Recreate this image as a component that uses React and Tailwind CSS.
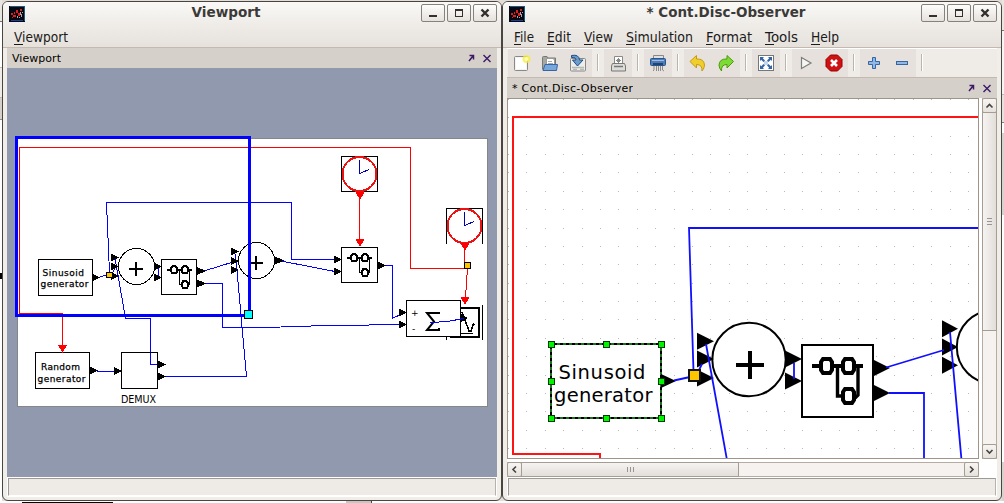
import React from "react";

const BLUE = "#0000ff";
const RED = "#ff0000";
const FONT = '"DejaVu Sans", Verdana, sans-serif';

/* ---------- window chrome ---------- */

function AppIcon() {
  return (
    <svg width="16" height="16" viewBox="0 0 16 16" shapeRendering="crispEdges">
      <rect width="16" height="16" fill="#050914" />
      <path d="M1 .5H15.5V15" fill="none" stroke="#1d5a7c" />
      <path d="M2 14.5H14" stroke="#1a3f9c" />
      <path d="M2 7h2v2h-2zM4 9h3v2h-3zM3 11h1v1h-1zM7 4h2v3h-2zM5 6h1v2h-1zM9 7h2v3h-2zM11 3h2v2h-2z" fill="#e01c1c" />
      <path d="M8 10h1v2h-1zM11 6h1v3h-1zM12 8h1v3h-1zM10 11h1v1h-1zM13 6h1v1h-1z" fill="#b7a4aa" />
    </svg>
  );
}

function TitleButton({ kind }) {
  return (
    <div className="h-[18px] w-6 rounded-[2px] border border-[#85827e] bg-linear-to-b from-[#fdfdfc] to-[#e6e1dc]">
      <svg width="22" height="16" viewBox="0 0 22 16" fill="none" stroke="#33302d" className="block">
        {kind === "min" && <path d="M7 11H15" strokeWidth="2" />}
        {kind === "max" && <path d="M7.5 4.5H14.5V11.5H7.5ZM7 5H15" strokeWidth="1.2" shapeRendering="crispEdges" />}
        {kind === "close" && <path d="M7.5 4.5L14.5 11.5M14.5 4.5L7.5 11.5" strokeWidth="2.4" />}
      </svg>
    </div>
  );
}

function TitleBar({ title, width }) {
  return (
    <div className="flex h-[25px] shrink-0 items-start">
      <div className="ml-[2px] w-4 pt-1"><AppIcon /></div>
      <svg className="-mr-[7px] -ml-[1px] h-[25px] flex-1" width="10" height="25">
        <text x="50%" y="15" textAnchor="middle" fontFamily={FONT} fontWeight="bold" fontSize="13.33" textLength={width} lengthAdjust="spacingAndGlyphs" fill="#3b3a38">{title}</text>
      </svg>
      <div className="flex gap-[2px] pt-[2px]">
        <TitleButton kind="min" /><TitleButton kind="max" /><TitleButton kind="close" />
      </div>
    </div>
  );
}

function MenuItem({ label, w }) {
  return (
    <svg width={w} height="20" className="overflow-visible">
      <text x="0" y="15" fontFamily={FONT} fontSize="13.33" textLength={w} lengthAdjust="spacingAndGlyphs" fill="#1a1a1a">{label}</text>
      <path d={label === "File" || label === "Edit" || label === "Format" ? "M0 17.5H7" : "M0 17.5H9"} stroke="#1a1a1a" shapeRendering="crispEdges" />
    </svg>
  );
}

function DockBar({ title, w }) {
  return (
    <div className="flex h-5 shrink-0 items-center justify-between bg-[#d5d0c9]">
      <svg width={w + 5} height="20">
        <text x="5" y="14" fontFamily={FONT} fontSize="11" textLength={w} fill="#000">{title}</text>
      </svg>
      <svg width="32" height="20" fill="none" stroke="#3c1a68" strokeWidth="1.4">
        <path d="M4.5 7.5H8.5V11.5M8 8L4 13" strokeWidth="1.5" />
        <path d="M18.5 7L25.5 14M25.5 7L18.5 14" />
      </svg>
    </div>
  );
}

function StatusBar() {
  return (
    <div className="h-5 shrink-0 border border-white bg-[#eeebe7]">
      <div className="h-[18px] border border-[#9c9a96] border-b-white border-r-[#b5b2ad]" />
    </div>
  );
}

function Window({ children }) {
  return (
    <div className="mt-[1px] flex h-[500px] w-[500px] shrink-0 flex-col overflow-hidden rounded-[6px] border border-[#494641] bg-[#f1eeea] px-1">
      {children}
    </div>
  );
}

/* ---------- diagram parts ---------- */

function Tri({ x, y, w = 8, h = 8 }) {
  return <path d={`M${x} ${y - h / 2}L${x + w} ${y}L${x} ${y + h / 2}Z`} fill="#000" />;
}

function DownTri({ x, y, h = 8 }) {
  return <path d={`M${x - 4.5} ${y}H${x + 4.5}L${x} ${y + h}Z`} fill={RED} />;
}

function SuperGlyph({ x, y, s = 1 }) {
  return (
    <g transform={`translate(${x} ${y}) scale(${s})`} fill="none" stroke="#000" strokeWidth="4">
      <path d="M10 21H61" />
      {[[19, 14], [41, 14], [41, 44]].map(([a, b]) => (
        <path key={a + "-" + b} d={`M${a + 2} ${b}H${a + 9}L${a + 11} ${b + 3}V${b + 11}L${a + 9} ${b + 14}H${a + 2}L${a} ${b + 11}V${b + 3}Z`} fill="#fff" />
      ))}
      <path d="M35.5 22V51H39M56 22V50L53 53" strokeWidth="3.4" />
    </g>
  );
}

function Clock({ cx, cy }) {
  return (
    <g>
      <circle cx={cx} cy={cy} r="17" fill="none" stroke="#ee1111" strokeWidth="2" />
      <path d={`M${cx} ${cy - 14}V${cy - .5}L${cx + 9.5} ${cy - 4.5}`} fill="none" stroke="#0000b0" />
    </g>
  );
}

function Label({ x, y, w, size, children }) {
  return <text x={x} y={y} textLength={w} fontSize={size} fontFamily={FONT} fill="#000">{children}</text>;
}

function OverviewDiagram() {
  return (
    <svg width="490" height="409" viewBox="7 68 490 409" className="block shrink-0" shapeRendering="crispEdges">
      <rect x="7" y="68" width="490" height="409" fill="#9099ae" />
      <rect x="17.5" y="138.5" width="470" height="268" fill="#fff" stroke="#85868a" />
      <g fill="none" stroke={RED}>
        <path d="M464 268.5H410.5V147.5H19.5V313.5H62.5V346" />
        <path d="M359.5 195V240M464.5 246V267M467.5 268L465.5 298" />
      </g>
      <g fill="none" stroke={BLUE}>
        <path d="M109.5 273L106.5 202.5H291.5V259.5H335" />
        <path d="M98 277.5L107 275M112 274L115 268M115 258L125.5 318.5H150.5V364.5H158" />
        <path d="M158.5 267V277M204 271L233 262M204 283.5H222.5V327.5H252L310 326.5L312 325.5H368L370 324.5H401" />
        <path d="M235.5 254L246.5 376.5H165M281 261L335 271.5M384 265.5H392.5V318L400 315M97 371.5H115" />
      </g>
      <g fill="none" stroke="#000">
        <path d="M38.5 259.5H92.5V295.5H38.5ZM35.5 352.5H89.5V388.5H35.5ZM121.5 352.5H157.5V388.5H121.5ZM161.5 259.5H196.5V294.5H161.5ZM341.5 247.5H377.5V282.5H341.5ZM341.5 156.5H377.5V191.5H341.5Z" />
        <path d="M446.5 244V208.5H482.5V244M482.5 305V340M446.5 336V340" />
        <circle cx="136.5" cy="266.5" r="18" /><circle cx="256.5" cy="260.5" r="18" />
        <path d="M129 269H143M136 262V276M249 263H263M256 256V270" strokeWidth="2" />
      </g>
      <Tri x={92} y={277.5} w={8} /><Tri x={90} y={370.5} w={8} /><Tri x={114} y={371} />
      {[257.5, 266.5, 276].map((y) => <Tri key={y} x={111} y={y} />)}
      {[251.5, 261, 270].map((y) => <Tri key={y} x={231} y={y} />)}
      <Tri x={154} y={266.5} /><Tri x={154} y={277.5} />
      <Tri x={197} y={271} w={9} /><Tri x={197} y={283.5} w={9} />
      <Tri x={158} y={364.5} /><Tri x={158} y={376.5} />
      <Tri x={275} y={260.5} w={9} /><Tri x={334} y={259.5} /><Tri x={334} y={271.5} /><Tri x={378} y={265.5} />
      <SuperGlyph x={162} y={259.5} s={0.493} />
      <SuperGlyph x={342} y={247.5} s={0.493} />
      <Clock cx={359.5} cy={174} /><Clock cx={464.5} cy={226} />
      <DownTri x={360} y={192} /><DownTri x={360} y={239} /><DownTri x={465} y={243} /><DownTri x={465} y={297} /><DownTri x={62.5} y={345} />
      <rect x="464.5" y="262.5" width="6" height="6" fill="#ffc400" stroke="#000" />
      <rect x="106.5" y="272.5" width="6" height="5" fill="#ffc400" stroke="#000" />
      <path d="M461 308H479V337H450" fill="none" stroke="#000" strokeWidth="2" />
      <rect x="406.5" y="300.5" width="54" height="36" fill="#fff" stroke="#000" />
      <path d="M461 333.5H473M462 312L469 331H471L473 325L474 324" fill="none" stroke="#000" strokeWidth="1.5" />
      <Tri x={399} y={312.5} /><Tri x={399} y={324.5} /><Tri x={461} y={318} w={7} />
      <Label x="411" y="316" size="9" w="7">+</Label>
      <Label x="412" y="332" size="9" w="4">-</Label>
      <path d="M439 314V313H427L434 321.5L427 330H439V328" fill="none" stroke="#000" strokeWidth="2" shapeRendering="auto" />
      <path d="M430 322.5H438L440 321.5H447L464 318.5" stroke={BLUE} fill="none" />
      <g strokeWidth="0.25" stroke="#000">
        <Label x="42.5" y="276" size="9" w="41.5">Sinusoid</Label>
        <Label x="40.5" y="287" size="9" w="48">generator</Label>
        <Label x="41" y="370" size="9" w="39">Random</Label>
        <Label x="37.5" y="382" size="9" w="48">generator</Label>
      </g>
      <Label x="121" y="403" size="9.6" w="35">DEMUX</Label>
      <rect x="16.5" y="137.5" width="233" height="178" fill="none" stroke={BLUE} strokeWidth="3" />
      <rect x="244.5" y="310.5" width="8" height="8" fill="#00ffff" stroke="#000" />
    </svg>
  );
}

function EditorDiagram() {
  const dots = [];
  for (let r = 0; r < 20; r++)
    for (let c = 0; c < 26; c++)
      dots.push(<rect key={r + "-" + c} x={Math.round(508 + c * 18.4)} y={Math.round(99 + r * 18.37)} width="1" height="1" fill="#b8b8b8" />);
  const handles = [[551, 344], [606, 344], [661, 344], [551, 381], [661, 381], [551, 418], [606, 418], [661, 418]];
  return (
    <svg width="470" height="359" viewBox="508 99 470 359" className="block">
      <rect x="508" y="99" width="470" height="359" fill="#fff" />
      <g shapeRendering="crispEdges">{dots}</g>
      <path d="M979 117H513V454H600V459" fill="none" stroke="#ff1414" strokeWidth="2" shapeRendering="crispEdges" />
      <g fill="#fff" stroke="#000" strokeWidth="2">
        <rect x="551" y="344" width="110" height="74" shapeRendering="crispEdges" />
        <circle cx="749" cy="359.5" r="36.7" /><circle cx="993.5" cy="347" r="36.7" />
        <rect x="802" y="345" width="71" height="72" shapeRendering="crispEdges" />
      </g>
      <rect x="551" y="344" width="110" height="74" fill="none" stroke="#35e535" strokeWidth="1" strokeDasharray="3 3" />
      <path d="M736 365H764M750 351V379" stroke="#000" strokeWidth="4" shapeRendering="crispEdges" />
      <SuperGlyph x={802} y={345} />
      <Tri x={661} y={381} w={15} h={14} />
      {[341.3, 359, 378].map((y) => <Tri key={y} x={697} y={y} w={17} h={17} />)}
      <Tri x={785} y={359} w={17} h={17} /><Tri x={785} y={381} w={17} h={17} />
      <Tri x={873} y={368} w={17} h={17} /><Tri x={873} y={393} w={17} h={17} />
      {[328.7, 347, 365.3].map((y) => <Tri key={y} x={942} y={y} w={16} h={17} />)}
      <g fill="none" stroke="#1010ff" strokeWidth="1.8">
        <path d="M979 228H689L693.5 371M674 380.5L690 377M698 372L702 364M706 344L727 460M794 363V379" />
        <path d="M886 367.5L944 350M889 393H924V460M950 332L961.5 460" />
      </g>
      <rect x="689" y="370" width="11" height="11" fill="#ffc400" stroke="#111" strokeWidth="2" shapeRendering="crispEdges" />
      {handles.map(([x, y]) => <rect key={x + "-" + y} x={x - 2.5} y={y - 2.5} width="6" height="6" fill="#00f400" stroke="#003c00" shapeRendering="crispEdges" />)}
      <Label x="558.5" y="379" size="19.5" w="87">Sinusoid</Label>
      <Label x="554" y="402" size="19.5" w="98.5">generator</Label>
    </svg>
  );
}

/* ---------- toolbar ---------- */

function ToolIcon({ kind }) {
  return (
    <div className="flex h-7 w-7 items-center justify-center bg-[#e6e1dc]">
      <svg width="18" height="18" viewBox="0 0 18 18" fill="none">
        {kind === "new" && <>
          <rect x="1.5" y="2.5" width="13" height="14" rx="1" fill="#f4f4f4" stroke="#888a85" />
          <rect x="3" y="4" width="10" height="11" fill="#fff" />
          <circle cx="13.5" cy="5" r="4" fill="#f7ec38" opacity=".75" /><circle cx="13.5" cy="5" r="2" fill="#fffcb0" />
        </>}
        {kind === "open" && <>
          <path d="M1.5 15.5V3.5Q1.5 2.5 2.5 2.5H6L7 4H14.5V14" fill="#a5a7a2" stroke="#777974" />
          <path d="M5.5 4.5H12L13.5 6V12H5.5Z" fill="#fff" stroke="#9a9a96" /><path d="M7 7.5H11M7 9.5H12" stroke="#aaa" />
          <path d="M4 10.5H16.5L15.5 16.5H2Z" fill="#79a7dc" stroke="#3465a4" />
        </>}
        {kind === "save" && <>
          <rect x="1.5" y="4.5" width="15" height="12.5" rx="1" fill="#ededeb" stroke="#888a85" />
          <path d="M3 13.5H15M4 15.5H8M11 15.5H15" stroke="#b8bab5" strokeWidth="1.4" />
          <path d="M2.5 1.5Q10 0 10.5 6H14L8.5 12L3.5 6H7Q7 3 2.5 3.5Z" fill="#6a9ec9" stroke="#204a87" />
        </>}
        {kind === "print" && <>
          <path d="M5.5 10V2.5H13.5V10" fill="#fff" stroke="#888a85" />
          <path d="M7 6.5H12M9.5 4V9M8 5L11 8M11 5L8 8" stroke="#888" />
          <path d="M3.5 9.5H15.5L16.5 12V17H2.5V12Z" fill="#dcdcda" stroke="#777974" /><path d="M5 12.5H14" stroke="#777" strokeWidth="1.5" />
        </>}
        {kind === "shred" && <>
          <path d="M4.5 5V1.5H14.5V5" fill="#e0e0e0" stroke="#888" />
          <rect x="1.5" y="4.5" width="15" height="7" rx="1" fill="#4d7db8" stroke="#27558f" />
          <path d="M3 6.5H15" stroke="#9dbde4" /><path d="M4 10H14" stroke="#172f52" strokeWidth="1.5" />
          <path d="M5 12V16L4 17M7.5 12V17M9.5 12V17M11.5 12V17M13.5 12V16L15 17" stroke="#8a8a88" />
        </>}
        {kind === "undo" && <path d="M7.5 1.5V5Q15 4.5 15.5 11Q15.5 14 13 17Q13.5 10.5 7.5 10.5V14L1 7.5Z" fill="#f0cf2c" stroke="#c69a10" />}
        {kind === "redo" && <path d="M10 1.5V5Q2.5 4.5 2 11Q2 14 4.5 17Q4 10.5 10 10.5V14L16.5 7.5Z" fill="#7bdc35" stroke="#4e9a06" />}
        {kind === "fit" && <>
          <rect x="1.5" y="1.5" width="15" height="15" fill="#fff" stroke="#73777a" />
          <rect x="7" y="7" width="4" height="4" fill="#c6d6ea" />
          <path d="M3 3H7L5.8 4.2L8 6.5L6.5 8L4.2 5.8L3 7ZM15 3V7L13.8 5.8L11.5 8L10 6.5L12.2 4.2L11 3ZM3 15V11L4.2 12.2L6.5 10L8 11.5L5.8 13.8L7 15ZM15 15H11L12.2 13.8L10 11.5L11.5 10L13.8 12.2L15 11Z" fill="#3465a4" />
        </>}
        {kind === "play" && <path d="M4.5 3.5L14 9L4.5 14.5Z" fill="#f5f5f3" stroke="#7c7e7a" strokeWidth="1.2" />}
        {kind === "stop" && <>
          <path d="M5.5 1H12.5L17 5.5V12.5L12.5 17H5.5L1 12.5V5.5Z" fill="#cc1212" stroke="#9c0000" />
          <path d="M6 6L12 12M12 6L6 12" stroke="#fff" strokeWidth="2.6" />
        </>}
        {kind === "plus" && <path d="M7.5 3.5H10.5V7.5H14.5V10.5H10.5V14.5H7.5V10.5H3.5V7.5H7.5Z" fill="#8fb8e8" stroke="#3465a4" />}
        {kind === "minus" && <rect x="3.5" y="7.5" width="11" height="3" fill="#8fb8e8" stroke="#3465a4" />}
      </svg>
    </div>
  );
}

function Sep() {
  return <div className="flex h-7 w-3 justify-center pt-[5px]"><div className="h-[17px] w-[2px] border-l border-[#bbb4ac] bg-white" /></div>;
}

function Toolbar() {
  const groups = [["new", "open", "save"], ["print"], ["shred"], ["undo", "redo"], ["fit"], ["play", "stop"], ["plus", "minus"]];
  return (
    <div className="flex h-[30px] shrink-0 items-start border-t border-b border-t-white border-b-[#c3b9ae] bg-[#efece8] pl-[1px]">
      {groups.map((g) => (
        <React.Fragment key={g[0]}>
          {g.map((k) => <ToolIcon key={k} kind={k} />)}
          <Sep />
        </React.Fragment>
      ))}
    </div>
  );
}

/* ---------- scrollbars ---------- */

function ScrollButton({ dir, size }) {
  const d = { up: "M3.5 8.5L6.5 5.5L9.5 8.5", down: "M3.5 5L6.5 8L9.5 5", left: "M8 3.5L5 6.5L8 9.5", right: "M5 3.5L8 6.5L5 9.5" }[dir];
  return (
    <div className={"flex shrink-0 items-center justify-center rounded-[2px] border border-[#a59c92] bg-linear-to-b from-[#f7f5f3] to-[#e6e1dc] " + size}>
      <svg width="13" height="13" fill="none" stroke="#454340" strokeWidth="1.6"><path d={d} /></svg>
    </div>
  );
}

/* Slivers of other windows showing behind the two main ones. */
function LeftSliver() {
  return (
    <div className="flex h-[501px] w-[2px] shrink-0 flex-col bg-white">
      <div className="h-[22px] border-b border-[#77736e] bg-[#e9e6e2]" />
      <div className="h-[46px] border-b border-[#c3b9ae] bg-white" />
      <div className="h-[30px] border-b border-[#c3b9ae] bg-[#efece8]" />
      <div className="h-[22px] border-b border-[#998d81] bg-[#d5d0c9]" />
      <div className="mt-[153px] h-[6px] bg-black" />
    </div>
  );
}

function RightSliver() {
  return (
    <div className="flex h-[501px] w-[2px] shrink-0 flex-col bg-[#d6d3ce]">
      <div className="h-[31px] border-b border-[#77736e] bg-[#e9e6e2]" />
      <div className="h-[64px] border-b border-[#c3b9ae] bg-[#f7f5f3]" />
      <div className="h-[28px] border-b border-[#85807a] bg-[#e6e1dc]" />
      <div className="h-[10px] bg-white" />
      <div className="mt-[82px] h-[247px] bg-white" />
    </div>
  );
}

export default function App() {
  return (
    <div className="flex h-[503px] w-[1004px] flex-col overflow-hidden bg-[#e2ddd8]">
      <div className="flex h-[501px] shrink-0">
        <LeftSliver />
        <Window>
          <div className="-mx-1 flex h-[46px] shrink-0 flex-col border-b border-[#c3b9ae] bg-linear-to-b from-[#faf9f7] via-[#efece8] to-[#e6e1dc] px-1">
            <TitleBar title="Viewport" width={69} />
            <div className="flex h-5 pl-[7px]"><MenuItem label="Viewport" w={54} /></div>
          </div>
          <DockBar title="Viewport" w={49} />
          <OverviewDiagram />
          <StatusBar />
        </Window>
        <Window>
          <div className="-mx-1 flex h-[46px] shrink-0 flex-col border-b border-[#c3b9ae] bg-linear-to-b from-[#faf9f7] via-[#efece8] to-[#e6e1dc] px-1">
            <TitleBar title="* Cont.Disc-Observer" width={159} />
            <div className="flex h-5 gap-[13px] pl-[7px]">
              <MenuItem label="File" w={20} />
              <MenuItem label="Edit" w={24} />
              <MenuItem label="View" w={29} />
              <MenuItem label="Simulation" w={67} />
              <MenuItem label="Format" w={46} />
              <MenuItem label="Tools" w={33} />
              <MenuItem label="Help" w={28} />
            </div>
          </div>
          <Toolbar />
          <DockBar title="* Cont.Disc-Observer" w={121} />
          <div className="flex h-[362px] shrink-0 justify-between bg-white">
            <div className="h-[361px] w-[472px] border border-[#a09488]"><EditorDiagram /></div>
            <div className="flex h-[361px] w-[15px] flex-col border-x border-[#b5aca2] bg-[#f6f2ef]">
              <ScrollButton dir="up" size="-mx-px h-[15px]" />
              <div className="-mx-px -mt-px flex h-[219px] flex-col items-center justify-center gap-[2px] border border-[#a59c92] bg-linear-to-r from-[#f5f3f1] to-[#e3deda]">
                <div className="h-px w-[5px] bg-[#99948d]" /><div className="h-px w-[5px] bg-[#99948d]" /><div className="h-px w-[5px] bg-[#99948d]" />
              </div>
              <div className="flex-1" />
              <ScrollButton dir="down" size="-mx-px h-[15px]" />
            </div>
          </div>
          <div className="flex h-[17px] shrink-0 bg-white pt-[2px]">
            <div className="flex h-[15px] w-[472px] border-y border-[#b5aca2] bg-[#f6f2ef]">
              <ScrollButton dir="left" size="-my-px w-[15px]" />
              <div className="-my-px -ml-px flex w-[218px] items-center justify-center gap-[2px] border border-[#a59c92] bg-linear-to-b from-[#f5f3f1] to-[#e3deda]">
                <div className="h-[5px] w-px bg-[#99948d]" /><div className="h-[5px] w-px bg-[#99948d]" /><div className="h-[5px] w-px bg-[#99948d]" />
              </div>
              <div className="flex-1" />
              <ScrollButton dir="right" size="-my-px w-[15px]" />
            </div>
          </div>
          <StatusBar />
        </Window>
        <RightSliver />
      </div>
      <div className="flex h-[2px] shrink-0 bg-white">
        <div className="ml-[22px] h-[2px] w-[91px] border-b border-black bg-white" />
        <div className="ml-[233px] h-[2px] w-[26px] border-r border-[#494641] bg-[#c9c5c0]" />
      </div>
    </div>
  );
}
